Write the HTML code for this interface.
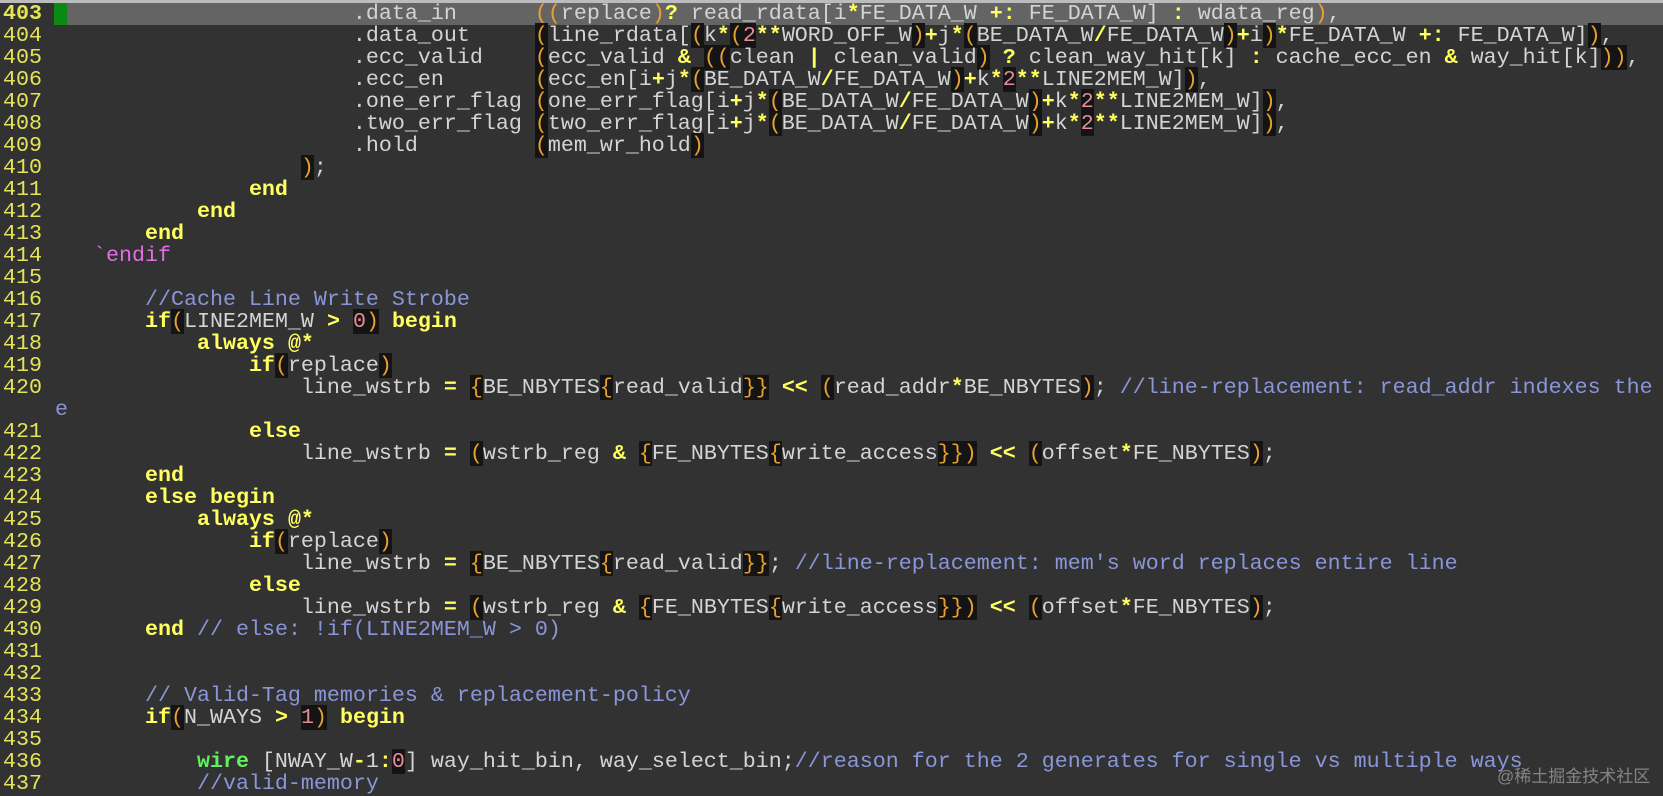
<!DOCTYPE html>
<html><head><meta charset="utf-8"><style>
html,body{margin:0;padding:0}
body{width:1663px;height:795px;background:#323232;position:relative;overflow:hidden;font-family:"Liberation Mono",monospace;font-size:21.67px;color:#d4d4d4}
pre{margin:0;font:inherit;line-height:22px;position:absolute;white-space:pre}
.top{position:absolute;left:0;top:0;width:1663px;height:3px;background:#bcbcbc}
.cl{position:absolute;left:54px;top:3px;width:1609px;height:22px;background:#646464}
.sign{position:absolute;left:54px;top:3px;width:13px;height:22px;background:#0a8a14}
#nums{left:3px;top:3px;color:#e4e45a}
#code{left:41px;top:3px}
.k{color:#ffff60;font-weight:bold}
.o{color:#ffff60;font-weight:bold}
.n{color:#e88a9a;background:#141414}
.p{color:#e8a030;background:#141414}
.q{color:#e8a030}
.c{color:#8a96d8}
.m{color:#e070e0}
.g{color:#60f060;font-weight:bold}
.wm{position:absolute;left:1497px;top:762px;font-family:"Liberation Sans","Noto Sans CJK SC",sans-serif;font-size:17px;color:rgba(200,200,200,0.55)}
</style></head><body>
<div class="top"></div>
<div class="cl"></div>
<div class="sign"></div>
<pre id="nums"><b>403</b>
404
405
406
407
408
409
410
411
412
413
414
415
416
417
418
419
420

421
422
423
424
425
426
427
428
429
430
431
432
433
434
435
436
437</pre>
<pre style="left:55px;top:399px" class="c">e</pre>
<pre id="code">                        .data_in      <span class="q">((</span>replace<span class="q">)</span><span class="o">?</span> read_rdata[i<span class="o">*</span>FE_DATA_W <span class="o">+:</span> FE_DATA_W] <span class="o">:</span> wdata_reg<span class="q">)</span>,
                        .data_out     <span class="p">(</span>line_rdata[<span class="p">(</span>k<span class="o">*</span><span class="p">(</span><span class="n">2</span><span class="o">**</span>WORD_OFF_W<span class="p">)</span><span class="o">+</span>j<span class="o">*</span><span class="p">(</span>BE_DATA_W<span class="o">/</span>FE_DATA_W<span class="p">)</span><span class="o">+</span>i<span class="p">)</span><span class="o">*</span>FE_DATA_W <span class="o">+:</span> FE_DATA_W]<span class="p">)</span>,
                        .ecc_valid    <span class="p">(</span>ecc_valid <span class="o">&amp;</span> <span class="p">((</span>clean <span class="o">|</span> clean_valid<span class="p">)</span> <span class="o">?</span> clean_way_hit[k] <span class="o">:</span> cache_ecc_en <span class="o">&amp;</span> way_hit[k]<span class="p">))</span>,
                        .ecc_en       <span class="p">(</span>ecc_en[i<span class="o">+</span>j<span class="o">*</span><span class="p">(</span>BE_DATA_W<span class="o">/</span>FE_DATA_W<span class="p">)</span><span class="o">+</span>k<span class="o">*</span><span class="n">2</span><span class="o">**</span>LINE2MEM_W]<span class="p">)</span>,
                        .one_err_flag <span class="p">(</span>one_err_flag[i<span class="o">+</span>j<span class="o">*</span><span class="p">(</span>BE_DATA_W<span class="o">/</span>FE_DATA_W<span class="p">)</span><span class="o">+</span>k<span class="o">*</span><span class="n">2</span><span class="o">**</span>LINE2MEM_W]<span class="p">)</span>,
                        .two_err_flag <span class="p">(</span>two_err_flag[i<span class="o">+</span>j<span class="o">*</span><span class="p">(</span>BE_DATA_W<span class="o">/</span>FE_DATA_W<span class="p">)</span><span class="o">+</span>k<span class="o">*</span><span class="n">2</span><span class="o">**</span>LINE2MEM_W]<span class="p">)</span>,
                        .hold         <span class="p">(</span>mem_wr_hold<span class="p">)</span>
                    <span class="p">)</span>;
                <span class="k">end</span>
            <span class="k">end</span>
        <span class="k">end</span>
    <span class="m">`endif</span>

        <span class="c">//Cache Line Write Strobe</span>
        <span class="k">if</span><span class="p">(</span>LINE2MEM_W <span class="o">&gt;</span> <span class="n">0</span><span class="p">)</span> <span class="k">begin</span>
            <span class="k">always</span> <span class="o">@*</span>
                <span class="k">if</span><span class="p">(</span>replace<span class="p">)</span>
                    line_wstrb <span class="o">=</span> <span class="p">{</span>BE_NBYTES<span class="p">{</span>read_valid<span class="p">}}</span> <span class="o">&lt;&lt;</span> <span class="p">(</span>read_addr<span class="o">*</span>BE_NBYTES<span class="p">)</span>; <span class="c">//line-replacement: read_addr indexes the</span>

                <span class="k">else</span>
                    line_wstrb <span class="o">=</span> <span class="p">(</span>wstrb_reg <span class="o">&amp;</span> <span class="p">{</span>FE_NBYTES<span class="p">{</span>write_access<span class="p">}})</span> <span class="o">&lt;&lt;</span> <span class="p">(</span>offset<span class="o">*</span>FE_NBYTES<span class="p">)</span>;
        <span class="k">end</span>
        <span class="k">else begin</span>
            <span class="k">always</span> <span class="o">@*</span>
                <span class="k">if</span><span class="p">(</span>replace<span class="p">)</span>
                    line_wstrb <span class="o">=</span> <span class="p">{</span>BE_NBYTES<span class="p">{</span>read_valid<span class="p">}}</span>; <span class="c">//line-replacement: mem's word replaces entire line</span>
                <span class="k">else</span>
                    line_wstrb <span class="o">=</span> <span class="p">(</span>wstrb_reg <span class="o">&amp;</span> <span class="p">{</span>FE_NBYTES<span class="p">{</span>write_access<span class="p">}})</span> <span class="o">&lt;&lt;</span> <span class="p">(</span>offset<span class="o">*</span>FE_NBYTES<span class="p">)</span>;
        <span class="k">end</span> <span class="c">// else: !if(LINE2MEM_W &gt; 0)</span>


        <span class="c">// Valid-Tag memories &amp; replacement-policy</span>
        <span class="k">if</span><span class="p">(</span>N_WAYS <span class="o">&gt;</span> <span class="n">1</span><span class="p">)</span> <span class="k">begin</span>

            <span class="g">wire</span> [NWAY_W<span class="o">-</span>1<span class="o">:</span><span class="n">0</span>] way_hit_bin, way_select_bin;<span class="c">//reason for the 2 generates for single vs multiple ways</span>
            <span class="c">//valid-memory</span></pre>
<div class="wm">@稀土掘金技术社区</div>
</body></html>
